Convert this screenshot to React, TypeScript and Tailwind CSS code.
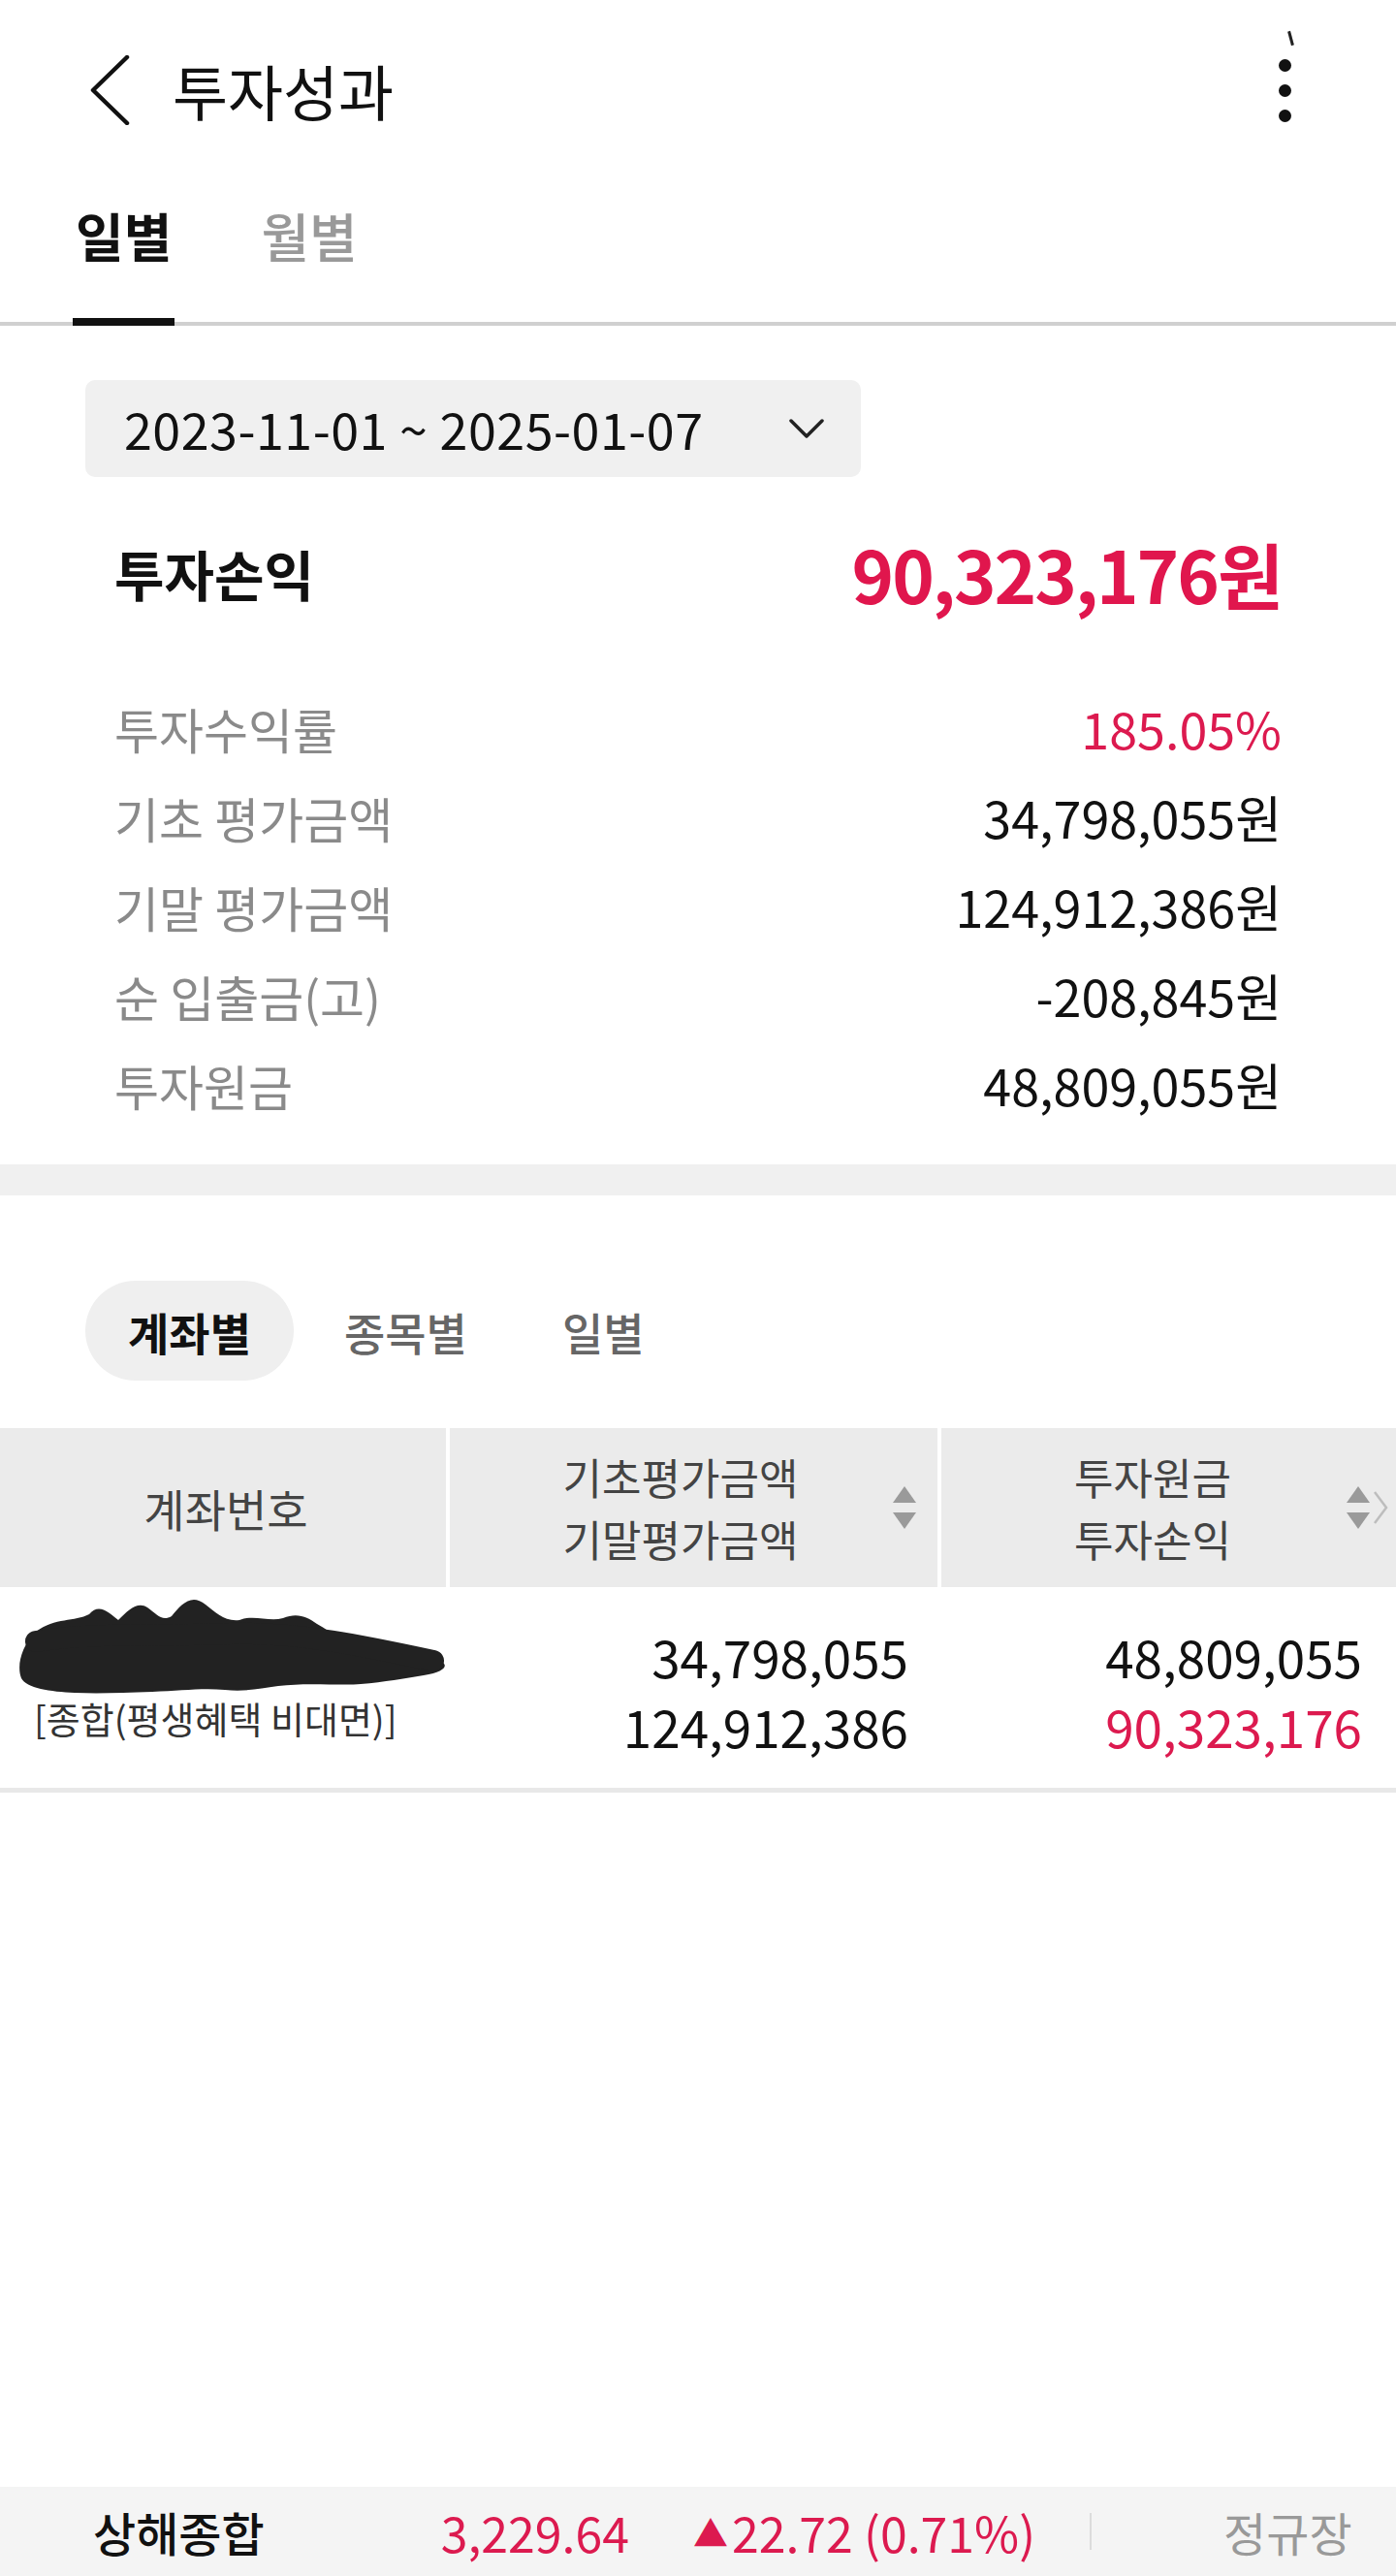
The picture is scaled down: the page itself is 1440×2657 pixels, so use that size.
import React from "react";

const Dots = () => (
  <div className="flex flex-col gap-[13px]">
    <div className="w-[13px] h-[13px] rounded-full bg-[#111]" />
    <div className="w-[13px] h-[13px] rounded-full bg-[#111]" />
    <div className="w-[13px] h-[13px] rounded-full bg-[#111]" />
  </div>
);

const SortArrows = () => (
  <svg width="26" height="46" viewBox="0 0 26 46">
    <polygon points="13,1 25,18 1,18" fill="#9a9a9a" />
    <polygon points="1,28 25,28 13,45" fill="#9a9a9a" />
  </svg>
);

const SummaryRow = ({ label, value, red }: { label: string; value: string; red?: boolean }) => (
  <div className="h-[92px] flex items-center justify-between">
    <span className="text-[50px] text-[#8a8a8a] leading-none">{label}</span>
    <span className={`text-[52px] leading-none ${red ? "text-[#dc1a4f]" : "text-[#111]"}`}>{value}</span>
  </div>
);

export default function App() {
  return (
    <div className="min-h-[2657px] flex flex-col bg-white font-['Noto_Sans_CJK_KR',sans-serif]">
      {/* Header */}
      <div className="relative h-[186px] flex items-center justify-between pl-[92px] pr-[108px]">
        <div className="flex items-center gap-[44px]">
          <svg width="42" height="72" viewBox="0 0 42 72">
            <polyline points="39,2 4,36 39,70" fill="none" stroke="#111" strokeWidth="4.5" strokeLinecap="round" strokeLinejoin="round" />
          </svg>
          <span className="text-[62px] text-[#111] leading-none">투자성과</span>
        </div>
        <Dots />
        <div className="absolute top-[32px] left-[1330px] w-[3px] h-[15px] bg-[#222] rotate-[-15deg]" />
      </div>

      {/* Tabs */}
      <div className="h-[146px] flex items-start pl-[75px] gap-[86px] pt-[30px]">
        <div className="relative h-[116px] px-[3px]">
          <span className="text-[54px] font-bold text-[#111] leading-none">일별</span>
          <div className="absolute left-0 right-0 bottom-[-4px] h-[8px] bg-[#111]" />
        </div>
        <div className="px-[3px]">
          <span className="text-[54px] font-medium text-[#999] leading-none">월별</span>
        </div>
      </div>
      <div className="h-[4px] bg-[#d0d0d0]" />

      {/* Summary */}
      <div className="px-[88px] pt-[56px] pb-[36px]">
        <div className="w-[800px] h-[100px] rounded-[10px] bg-[#f0f0f0] flex items-center justify-between pl-[40px] pr-[38px]">
          <span className="text-[52px] text-[#111] leading-none tracking-[0.5px]">2023-11-01 ~ 2025-01-07</span>
          <svg width="36" height="22" viewBox="0 0 36 22">
            <polyline points="2,3 18,19 34,3" fill="none" stroke="#222" strokeWidth="3.5" strokeLinecap="round" strokeLinejoin="round" />
          </svg>
        </div>
        <div className="px-[30px]">
          <div className="mt-[59px] h-[80px] flex items-center justify-between">
            <span className="text-[56px] font-bold text-[#111] leading-none">투자손익</span>
            <span className="text-[74px] font-bold text-[#e0164d] leading-none tracking-[-2px]">90,323,176원</span>
          </div>
          <div className="mt-[74px]">
            <SummaryRow label="투자수익률" value="185.05%" red />
            <SummaryRow label="기초 평가금액" value="34,798,055원" />
            <SummaryRow label="기말 평가금액" value="124,912,386원" />
            <SummaryRow label="순 입출금(고)" value="-208,845원" />
            <SummaryRow label="투자원금" value="48,809,055원" />
          </div>
        </div>
      </div>
      <div className="h-[32px] bg-[#f0f0f0]" />

      {/* Sub tabs */}
      <div className="pl-[88px] pt-[88px] flex items-center">
        <div className="h-[103px] px-[44px] rounded-full bg-[#efefef] flex items-center">
          <span className="text-[46px] font-bold text-[#111] leading-none">계좌별</span>
        </div>
        <span className="ml-[52px] text-[46px] font-medium text-[#666] leading-none">종목별</span>
        <span className="ml-[98px] text-[46px] font-medium text-[#666] leading-none">일별</span>
      </div>

      {/* Table header */}
      <div className="mt-[49px] h-[164px] flex gap-[4px]">
        <div className="w-[460px] bg-[#ebebeb] flex items-center justify-center pl-[6px]">
          <span className="text-[46px] text-[#444] leading-none">계좌번호</span>
        </div>
        <div className="w-[503px] bg-[#ebebeb] flex items-center pl-[20px] pr-[21px]">
          <div className="flex-1 flex flex-col items-center text-[44px] text-[#444] leading-[64px]">
            <span>기초평가금액</span>
            <span>기말평가금액</span>
          </div>
          <SortArrows />
        </div>
        <div className="relative flex-1 bg-[#ebebeb] flex items-center pl-[19px] pr-[26px]">
          <div className="flex-1 flex flex-col items-center text-[44px] text-[#444] leading-[64px]">
            <span>투자원금</span>
            <span>투자손익</span>
          </div>
          <SortArrows />
          <svg className="absolute right-[8px] top-[64px]" width="16" height="36" viewBox="0 0 16 36">
            <polyline points="2,2 14,18 2,34" fill="none" stroke="#bdbdbd" strokeWidth="2.5" />
          </svg>
        </div>
      </div>

      {/* Data row */}
      <div className="h-[207px] flex gap-[4px]">
        <div className="w-[460px] flex flex-col pl-[17px] pt-[6px]">
          <svg width="447" height="105" viewBox="0 0 447 105">
            <path
              d="M20,40 C40,25 60,30 75,22 C85,10 95,20 105,28 C115,18 125,8 135,15 C145,22 150,30 160,24 C170,12 180,0 195,12 C205,20 215,30 230,28 C245,22 260,30 275,26 C290,20 300,25 310,32 C325,40 330,45 320,60 C340,55 360,60 375,65 C395,72 420,70 440,72 C445,76 440,82 420,85 C400,88 380,92 355,94 C335,96 300,92 270,96 C250,99 235,102 215,100 C190,98 170,101 140,102 C110,103 85,104 60,103 C35,102 10,98 5,88 C0,75 5,55 20,40 Z"
              fill="#222"
            />
            <path d="M20,50 C80,40 150,45 220,42 C290,40 360,55 430,70" fill="none" stroke="#222" strokeWidth="22" strokeLinecap="round" />
          </svg>
          <span className="ml-[18px] mt-[2px] text-[38px] text-[#333] leading-[44px]">[종합(평생혜택 비대면)]</span>
        </div>
        <div className="w-[503px] flex flex-col items-end pr-[30px] pt-[35px] text-[53px] text-[#111] leading-[72px]">
          <span>34,798,055</span>
          <span>124,912,386</span>
        </div>
        <div className="flex-1 flex flex-col items-end pr-[35px] pt-[35px] text-[53px] leading-[72px]">
          <span className="text-[#111]">48,809,055</span>
          <span className="text-[#dc1a4f]">90,323,176</span>
        </div>
      </div>
      <div className="h-[5px] bg-[#e8e8e8]" />

      {/* Bottom bar */}
      <div className="mt-auto h-[92px] bg-[#f4f4f4] flex items-center pl-[96px]">
        <span className="text-[48px] font-medium text-[#111] leading-none">상해종합</span>
        <span className="ml-[182px] text-[50px] text-[#dc1a4f] leading-none">3,229.64</span>
        <span className="ml-[66px] text-[50px] text-[#dc1a4f] leading-none flex items-center">
          <span className="text-[36px] mr-[4px]">▲</span>22.72 (0.71%)
        </span>
        <div className="ml-[56px] w-[2px] h-[38px] bg-[#dcdcdc]" />
        <span className="ml-[136px] text-[48px] text-[#999] leading-none">정규장</span>
      </div>
    </div>
  );
}
